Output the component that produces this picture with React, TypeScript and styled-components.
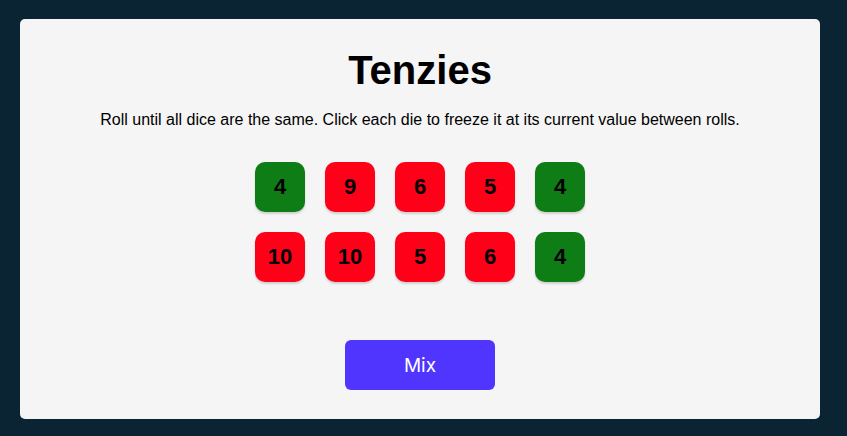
import React from "react";
import styled, { createGlobalStyle } from "styled-components";

const Global = createGlobalStyle`
  html, body { margin: 0; padding: 0; background: #0B2434; }
  body { font-family: "Liberation Sans", Arial, sans-serif; }
`;

const Page = styled.div`
  width: 847px;
  height: 436px;
  box-sizing: border-box;
  padding: 19px 27px 17px 20px;
  background: #0b2434;
`;

const Card = styled.main`
  width: 800px;
  height: 400px;
  box-sizing: border-box;
  background: #f5f5f5;
  border-radius: 5px;
  display: flex;
  flex-direction: column;
  align-items: center;
  padding-top: 28px;
`;

const Title = styled.h1`
  margin: 0;
  font-size: 40px;
  font-weight: 700;
  line-height: 46px;
  color: #000;
`;

const Instructions = styled.p`
  margin: 18px 0 0;
  font-size: 16px;
  line-height: 18px;
  color: #000;
`;

const DiceGrid = styled.div`
  display: grid;
  grid-template-columns: repeat(5, 50px);
  gap: 20px;
  margin-top: 33px;
`;

const Die = styled.button<{ $held: boolean }>`
  width: 50px;
  height: 50px;
  border: none;
  border-radius: 10px;
  background: ${(p) => (p.$held ? "#0F7D15" : "#FF0019")};
  box-shadow: 0 2px 2px rgba(0, 0, 0, 0.15);
  font-family: "Liberation Sans", Arial, sans-serif;
  font-size: 22px;
  font-weight: 700;
  color: #000;
  padding: 0;
  cursor: pointer;
`;

const RollButton = styled.button`
  margin-top: 58px;
  width: 150px;
  height: 50px;
  border: none;
  border-radius: 6px;
  background: #5035ff;
  color: #fff;
  font-family: Inter, "Liberation Sans", sans-serif;
  font-size: 19px;
  cursor: pointer;
`;

const dice = [
  { v: 4, held: true },
  { v: 9, held: false },
  { v: 6, held: false },
  { v: 5, held: false },
  { v: 4, held: true },
  { v: 10, held: false },
  { v: 10, held: false },
  { v: 5, held: false },
  { v: 6, held: false },
  { v: 4, held: true },
];

export default function App() {
  return (
    <>
      <Global />
      <Page>
        <Card>
          <Title>Tenzies</Title>
          <Instructions>
            Roll until all dice are the same. Click each die to freeze it at its current value between rolls.
          </Instructions>
          <DiceGrid>
            {dice.map((d, i) => (
              <Die key={i} $held={d.held}>
                {d.v}
              </Die>
            ))}
          </DiceGrid>
          <RollButton>Mix</RollButton>
        </Card>
      </Page>
    </>
  );
}
